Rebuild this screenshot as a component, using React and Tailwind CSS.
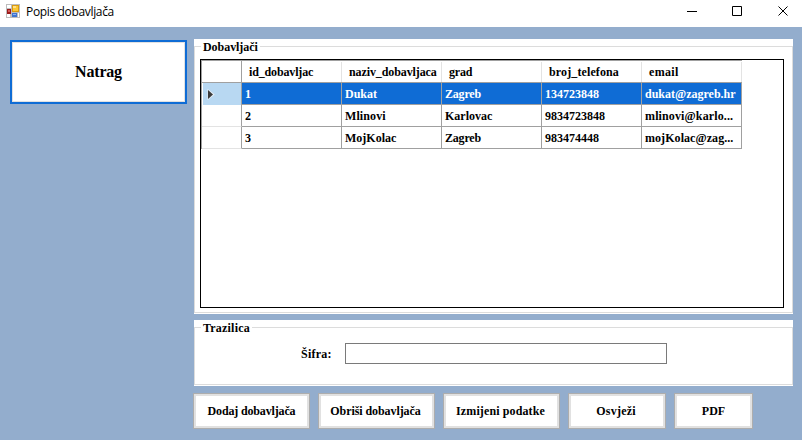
const columns = [
  { name: 'id_dobavljac', track: 'tracking-[-0.15px]' },
  { name: 'naziv_dobavljaca', track: 'tracking-[-0.1px]' },
  { name: 'grad', track: 'tracking-[-0.2px]' },
  { name: 'broj_telefona', track: 'tracking-[0.12px]' },
  { name: 'email', track: 'tracking-[0.35px]' },
];

const rows = [
  ['1', 'Dukat', 'Zagreb', '134723848', 'dukat@zagreb.hr'],
  ['2', 'Mlinovi', 'Karlovac', '9834723848', 'mlinovi@karlo...'],
  ['3', 'MojKolac', 'Zagreb', '983474448', 'mojKolac@zag...'],
];

const tracking = {
  Zagreb: 'tracking-[-0.2px]',
  Mlinovi: 'tracking-[0.1px]',
  'mlinovi@karlo...': 'tracking-[0.13px]',
  'mojKolac@zag...': 'tracking-[0.06px]',
};

function AppIcon() {
  return (
    <svg width="14" height="14" viewBox="0 0 14 14" shapeRendering="crispEdges">
      <rect width="14" height="14" fill="#bdbdbd" />
      <rect x="1" y="1" width="4" height="3" fill="#fff" />
      <rect x="1" y="10" width="3" height="3" fill="#fff" />
      <rect x="1" y="5" width="4" height="5" fill="#9c1c1c" />
      <rect x="2" y="6" width="2" height="2" fill="#d65a5a" />
      <rect x="6" y="1" width="7" height="7" fill="#d99a10" />
      <rect x="7" y="2" width="5" height="5" fill="#fbc835" />
      <rect x="7" y="2" width="3" height="2" fill="#ffe08a" />
      <rect x="6" y="9" width="5" height="4" fill="#3f74d0" />
      <rect x="7" y="10" width="3" height="1" fill="#8ab2f2" />
      <rect x="12" y="9" width="1" height="4" fill="#fff" />
    </svg>
  );
}

function TitleBar() {
  return (
    <header className="flex h-[27px] items-start bg-white pl-[6px] text-black">
      <div className="pt-[4px]"><AppIcon /></div>
      <h1 className="ml-[6px] mt-[4px] whitespace-nowrap font-['Open_Sans',sans-serif] text-[12px] leading-[16px] tracking-[-0.34px]">
        Popis dobavljača
      </h1>
      <svg className="ml-auto mr-[12px] mt-[5px]" width="103" height="12" viewBox="0 0 103 12" fill="none" stroke="#000">
        <path d="M0 6.5h10" />
        <path d="M45.5 1.5h9v9h-9z" />
        <path d="M91.5 1.5l9 9M100.500 1.500l-9 9" />
      </svg>
    </header>
  );
}

function GroupBox({ title, titleClass = '', className, children }) {
  return (
    <fieldset className={`relative bg-white ${className}`}>
      <div className="absolute inset-x-0 bottom-px top-[7px] border border-[#dcdcdc]" />
      <legend className="contents">
        <span className={`absolute left-[7px] top-px bg-white px-[2px] leading-[15px] ${titleClass}`}>{title}</span>
      </legend>
      {children}
    </fieldset>
  );
}

function DataGrid() {
  return (
    <div className="relative ml-[6px] mt-[20px] h-[249px] w-[584px] border border-black bg-white">
      <div className="w-[541px] border-l border-t border-[#a0a0a0]">
        <div className="flex h-[22px] border-b border-[#a0a0a0]">
          <div className="w-[40px] border-r border-[#a0a0a0]" />
          {columns.map((c) => (
            <div key={c.name} className={`mt-px w-[100px] overflow-hidden whitespace-nowrap border-r border-[#e3e3e3] pl-[7px] leading-[20px] ${c.track}`}>
              {c.name}
            </div>
          ))}
        </div>
        {rows.map((row, i) => (
          <div key={row[0]} className={`flex h-[22px] ${i === 0 ? 'text-white' : ''}`}>
            <div className={`flex w-[40px] border-r border-r-[#a0a0a0] ${i === 0 ? 'border-l border-l-white bg-[#b8d8f2]' : 'border-b border-b-[#e3e3e3]'}`}>
              {i === 0 && (
                <svg className="ml-[4px] mt-[5px]" width="9" height="13" viewBox="0 0 9 13">
                  <path d="M.5 .8v11.400L7.700 6.500z" fill="#e4eef7" />
                  <path d="M1 2v9L6 6.500z" fill="#3a3a3a" />
                </svg>
              )}
            </div>
            {row.map((v, j) => (
              <div key={j} className={`w-[100px] overflow-hidden whitespace-nowrap border-b border-r border-[#a0a0a0] pl-[3px] leading-[23px] ${i === 0 ? 'bg-[#0f6cd5]' : ''} ${tracking[v] || ''}`}>
                {v}
              </div>
            ))}
          </div>
        ))}
      </div>
    </div>
  );
}

function ActionButton({ className, children }) {
  return (
    <button type="button" className={`h-[36px] whitespace-nowrap border border-[#adadad] bg-[#e1e1e1] p-[2px] ${className}`}>
      <span className="flex h-full items-center justify-center bg-white">{children}</span>
    </button>
  );
}

export default function App() {
  return (
    <div className="flex h-[440px] w-[802px] flex-col overflow-hidden bg-[#93adcd] font-['Liberation_Serif',serif] text-[12px] font-bold text-black">
      <div className="font-normal"><TitleBar /></div>
      <main className="flex flex-1">
        <aside className="ml-[10px] mt-[13px] w-[183px]">
          <button type="button" className="h-[64px] w-[177px] border-2 border-[#0f6cd5] bg-white text-[16px] tracking-[-0.2px]">
            <span className="flex h-full items-center justify-center border border-[#e1e1e1]">Natrag</span>
          </button>
        </aside>
        <section className="pt-[12px]">
          <GroupBox title="Dobavljači" titleClass="tracking-[-0.05px]" className="ml-px flex h-[275px] w-[599px]">
            <DataGrid />
          </GroupBox>
          <GroupBox title="Trazilica" titleClass="tracking-[0.2px]" className="ml-px mt-[6px] h-[66px] w-[599px]">
            <div className="relative flex pl-[107px] pt-[23px]">
              <label htmlFor="sifra" className="w-[44px] leading-[22px] tracking-[0.25px]">Šifra:</label>
              <input id="sifra" className="h-[21px] w-[322px] border border-[#7a7a7a] bg-white" />
            </div>
          </GroupBox>
          <div className="mt-[7px] flex">
            <ActionButton className="w-[117px] tracking-[-0.15px]">Dodaj dobavljača</ActionButton>
            <ActionButton className="ml-[8px] w-[117px] tracking-[-0.08px]"><span className="mr-[2px]">Obriši dobavljača</span></ActionButton>
            <ActionButton className="ml-[8px] w-[117px] tracking-[0.12px]"><span className="mr-[2px]">Izmijeni podatke</span></ActionButton>
            <ActionButton className="ml-[8px] w-[98px] tracking-[0.25px]"><span className="mr-[2px]">Osvježi</span></ActionButton>
            <ActionButton className="ml-[8px] w-[79px]">PDF</ActionButton>
          </div>
        </section>
      </main>
    </div>
  );
}
